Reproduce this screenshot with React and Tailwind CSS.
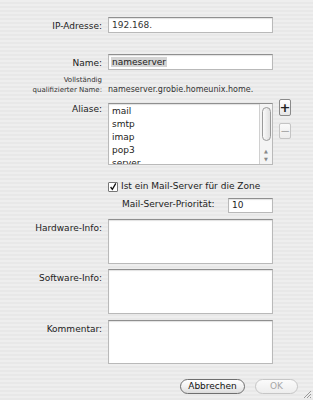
import React from 'react';

const Field = ({ children, className = '' }) => (
    <div className={`bg-white border border-[#b9b9b9] border-t-[#8f8f8f] shadow-[inset_0_1px_1px_rgba(0,0,0,0.12)] ${className}`}>
        {children}
    </div>
);

const Row = ({ label, children, className = '', labelClass = '' }) => (
    <div className={`flex ${className}`}>
        <div className={`w-[102px] text-right text-[9px] text-[#222] ${labelClass}`}>{label}</div>
        <div className="ml-[6px]">{children}</div>
    </div>
);

const aliases = ['mail', 'smtp', 'imap', 'pop3', 'server'];

const App = () => {
    return (
        <div
            className="w-[313px] h-[400px] overflow-hidden relative bg-[repeating-linear-gradient(180deg,#eeeeee_0px,#eeeeee_2px,#e8e8e8_2px,#e8e8e8_4px)] text-[#222]"
            style={{ fontFamily: '"DejaVu Sans", "Liberation Sans", sans-serif' }}
        >
            <div className="flex flex-col pt-[17px]">
                <Row label="IP-Adresse:" labelClass="pt-[3px]">
                    <Field className="w-[165px] h-[16px] px-[3px] text-[9px] leading-[14px] text-[#333]">192.168.</Field>
                </Row>

                <Row label="Name:" className="mt-[20px]" labelClass="pt-[3px]">
                    <Field className="w-[165px] h-[16px] px-[2px] text-[9px] leading-[14px]">
                        <span className="bg-[#d4d4d4] px-[1px]">nameserver</span>
                    </Field>
                </Row>

                <div className="flex items-end mt-[5px]">
                    <div className="w-[102px] text-right text-[7px] leading-[10px] text-[#333]">
                        Vollständig<br />qualifizierter Name:
                    </div>
                    <div className="ml-[6px] text-[8px] leading-[10px] text-[#333]">nameserver.grobie.homeunix.home.</div>
                </div>

                <div className="flex mt-[8px]">
                    <div className="w-[102px] text-right text-[9px] pt-[0px]">Aliase:</div>
                    <Field className="ml-[6px] w-[165px] h-[62px] flex overflow-hidden">
                        <div className="flex-1 pl-[3px] text-[9px] leading-[13px] pt-[1px]">
                            {aliases.map(a => <div key={a}>{a}</div>)}
                        </div>
                        <div className="w-[13px] border-l border-[#d0d0d0] bg-[#f4f4f4] flex flex-col items-center">
                            <div className="mt-[3px] w-[9px] h-[34px] rounded-full border border-[#9a9a9a] bg-gradient-to-r from-[#fafafa] to-[#e0e0e0]" />
                            <div className="flex-1" />
                            <div className="text-[5px] leading-[8px] text-[#888]">▲</div>
                            <div className="text-[5px] leading-[8px] text-[#888] mb-[1px]">▼</div>
                        </div>
                    </Field>
                    <div className="ml-[6px] flex flex-col gap-[7px] -mt-[4px]">
                        <div className="w-[12px] h-[17px] rounded-[2px] border border-[#8a8a8a] bg-gradient-to-b from-white to-[#e6e6e6] flex items-center justify-center text-[13px] font-bold leading-none text-[#222]">+</div>
                        <div className="w-[12px] h-[16px] rounded-[2px] border border-[#c4c4c4] bg-gradient-to-b from-[#fafafa] to-[#ececec] flex items-center justify-center text-[12px] leading-none text-[#aaa]">−</div>
                    </div>
                </div>

                <div className="flex items-center ml-[108px] mt-[15px] text-[9px]">
                    <div className="w-[10px] h-[10px] border border-[#777] bg-white flex items-center justify-center rounded-[1px]">
                        <svg width="10" height="10" viewBox="0 0 10 10">
                            <path d="M2 5 L4.2 8 L8.5 0.5" fill="none" stroke="#111" strokeWidth="1.6" />
                        </svg>
                    </div>
                    <span className="ml-[3px]">Ist ein Mail-Server für die Zone</span>
                </div>

                <div className="flex items-center mt-[4px]">
                    <div className="ml-[122px] w-[106px] text-[9px]">Mail-Server-Priorität:</div>
                    <Field className="w-[45px] h-[15px] px-[3px] text-[9px] leading-[13px]">10</Field>
                </div>

                <Row label="Hardware-Info:" className="mt-[6px]" labelClass="pt-[3px]">
                    <Field className="w-[165px] h-[45px]" />
                </Row>
                <Row label="Software-Info:" className="mt-[5px]" labelClass="pt-[3px]">
                    <Field className="w-[165px] h-[45px]" />
                </Row>
                <Row label="Kommentar:" className="mt-[6px]" labelClass="pt-[3px]">
                    <Field className="w-[165px] h-[44px]" />
                </Row>

                <div className="flex mt-[15px] ml-[180px] gap-[10px]">
                    <div className="w-[65px] h-[15px] rounded-full border border-[#6f6f6f] bg-gradient-to-b from-white via-[#f2f2f2] to-[#dcdcdc] text-[9px] leading-[13px] text-center text-[#111]">Abbrechen</div>
                    <div className="w-[43px] h-[15px] rounded-full border border-[#c6c6c6] bg-gradient-to-b from-[#fbfbfb] to-[#ededed] text-[9px] leading-[13px] text-center text-[#a8a8a8]">OK</div>
                </div>
            </div>

            <svg className="absolute right-[1px] bottom-[1px]" width="10" height="10" viewBox="0 0 10 10">
                <path d="M9 2 L2 9 M9 5 L5 9 M9 8 L8 9" stroke="#999" strokeWidth="1" />
            </svg>
        </div>
    );
};

export default App;
